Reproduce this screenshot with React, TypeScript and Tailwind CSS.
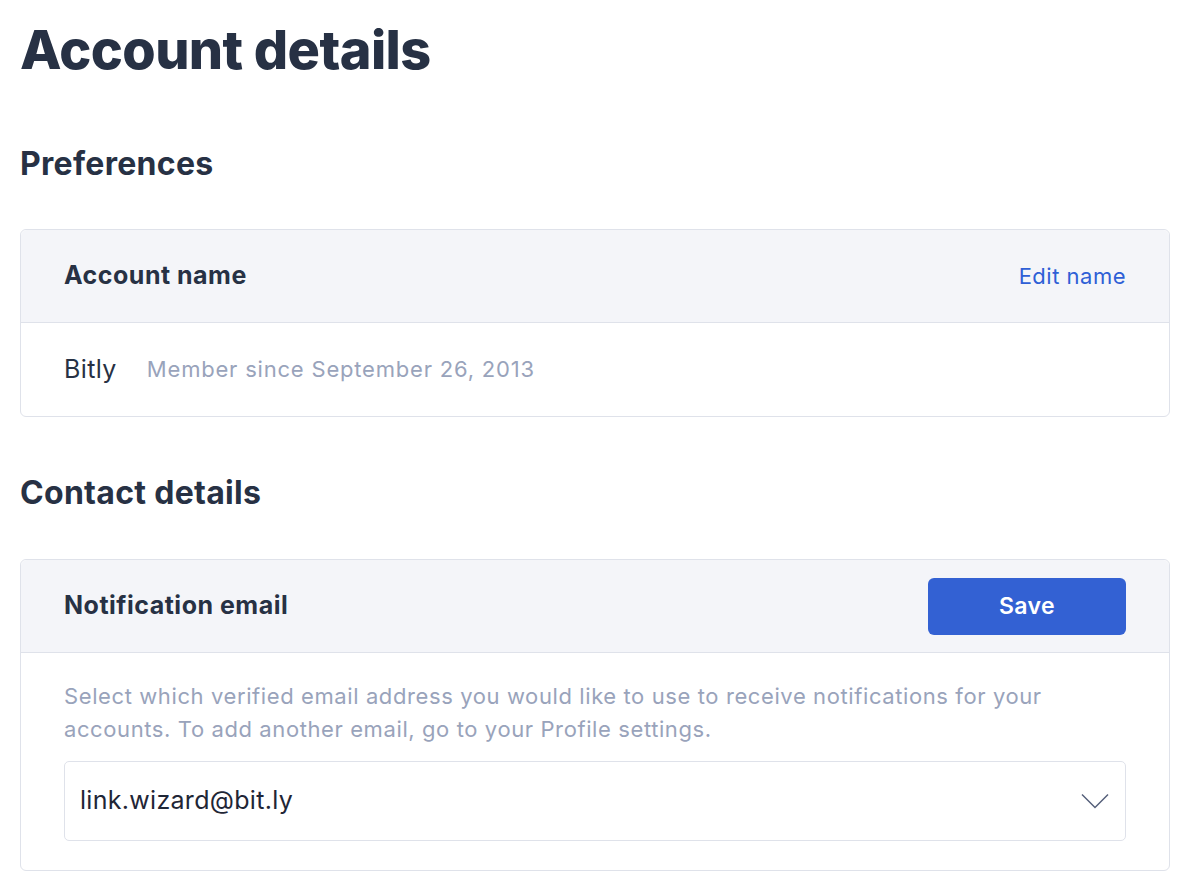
function Card({ title, action, children }: { title: string; action: React.ReactNode; children: React.ReactNode }) {
  return (
    <div className="rounded-[6px] border border-[#dfe2ea] bg-white">
      <div className="flex h-[93px] items-center justify-between rounded-t-[6px] border-b border-[#dfe2ea] bg-[#f4f5f9] px-[43px]">
        <h3 className="text-[25px] font-bold tracking-[0.5px] text-[#273144]">{title}</h3>
        {action}
      </div>
      {children}
    </div>
  );
}

export default function App() {
  return (
    <div className="min-h-screen bg-white px-[20px] pt-[14px] font-['Inter','Liberation_Sans',sans-serif] text-[#273144]">
      <h1 className="text-[54px] font-extrabold leading-[72px] tracking-[-0.6px]">Account details</h1>

      <h2 className="mt-[58px] text-[32px] font-bold leading-[40px] tracking-[0.3px]">Preferences</h2>
      <div className="mt-[45px]">
        <Card
          title="Account name"
          action={<button className="text-[22px] tracking-[0.5px] text-[#2e5fd6]">Edit name</button>}
        >
          <div className="flex h-[93px] items-center gap-[30px] px-[43px]">
            <span className="text-[25px] tracking-[0.4px] text-[#273144]">Bitly</span>
            <span className="text-[22px] tracking-[0.8px] text-[#99a3bb]">Member since September 26, 2013</span>
          </div>
        </Card>
      </div>

      <h2 className="mt-[56px] text-[32px] font-bold leading-[40px] tracking-[0.3px]">Contact details</h2>
      <div className="mt-[46px]">
        <Card
          title="Notification email"
          action={
            <button className="h-[57px] w-[198px] rounded-[6px] bg-[#3361d3] text-[23px] font-semibold tracking-[0.4px] text-white">
              Save
            </button>
          }
        >
          <div className="px-[43px] pb-[29px] pt-[27px]">
            <p className="text-[22px] leading-[33px] tracking-[0.6px] text-[#99a3bb]">
              Select which verified email address you would like to use to receive notifications for your
              accounts. To add another email, go to your Profile settings.
            </p>
            <div className="mt-[15px] flex h-[80px] items-center justify-between rounded-[5px] border border-[#dfe2ea] pl-[15px] pr-[16px]">
              <span className="text-[25px] tracking-[0.3px] text-[#1f2636]">link.wizard@bit.ly</span>
              <svg width="28" height="16" viewBox="0 0 28 16" fill="none" className="text-[#56607a]">
                <polyline points="1,1.5 14,14.5 27,1.5" stroke="currentColor" strokeWidth="1.5" />
              </svg>
            </div>
          </div>
        </Card>
      </div>
    </div>
  );
}
